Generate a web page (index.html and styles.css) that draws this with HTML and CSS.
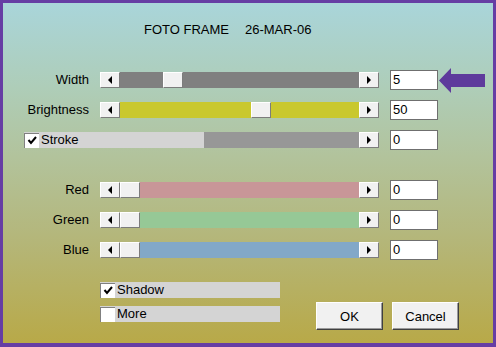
FILE: index.html
```html
<!DOCTYPE html>
<html>
<head>
<meta charset="utf-8">
<link rel="stylesheet" href="styles.css">
</head>
<body>
<div class="dialog">
  <div class="title"><span>FOTO FRAME</span><span>26-MAR-06</span></div>

  <div class="rows">
    <div class="row">
      <div class="label">Width</div>
      <div class="slider">
        <div class="sbtn"><span class="tri-left"></span></div>
        <div class="track gray"><div class="pad" style="width:43px"></div><div class="thumb"></div></div>
        <div class="sbtn"><span class="tri-right"></span></div>
      </div>
      <div class="value">5</div>
      <svg class="pointer" width="46" height="26" viewBox="0 0 46 26"><polygon points="0,12.5 12,0 12,6 46,6 46,19 12,19 12,25" fill="#5e3a9c"/></svg>
    </div>

    <div class="row">
      <div class="label">Brightness</div>
      <div class="slider">
        <div class="sbtn"><span class="tri-left"></span></div>
        <div class="track yellow"><div class="pad" style="width:131px"></div><div class="thumb"></div></div>
        <div class="sbtn"><span class="tri-right"></span></div>
      </div>
      <div class="value">50</div>
    </div>

    <div class="row">
      <div class="stroke-check">
        <span class="check"><svg width="13" height="13" viewBox="0 0 13 13"><polyline points="2.5,6 5,9 10,3" fill="none" stroke="#000" stroke-width="2"/></svg></span>
        <span class="opt-text">Stroke</span>
      </div>
      <div class="stroke-track"></div>
      <div class="sbtn gapped"><span class="tri-right"></span></div>
      <div class="value">0</div>
    </div>

    <div class="row spaced">
      <div class="label">Red</div>
      <div class="slider">
        <div class="sbtn"><span class="tri-left"></span></div>
        <div class="track red"><div class="thumb"></div></div>
        <div class="sbtn"><span class="tri-right"></span></div>
      </div>
      <div class="value">0</div>
    </div>

    <div class="row">
      <div class="label">Green</div>
      <div class="slider">
        <div class="sbtn"><span class="tri-left"></span></div>
        <div class="track green"><div class="thumb"></div></div>
        <div class="sbtn"><span class="tri-right"></span></div>
      </div>
      <div class="value">0</div>
    </div>

    <div class="row">
      <div class="label">Blue</div>
      <div class="slider">
        <div class="sbtn"><span class="tri-left"></span></div>
        <div class="track blue"><div class="thumb"></div></div>
        <div class="sbtn"><span class="tri-right"></span></div>
      </div>
      <div class="value">0</div>
    </div>
  </div>

  <div class="bottom">
    <div class="options">
      <div class="option">
        <span class="check"><svg width="13" height="13" viewBox="0 0 13 13"><polyline points="2.5,6 5,9 10,3" fill="none" stroke="#000" stroke-width="2"/></svg></span>
        <span class="opt-text">Shadow</span>
      </div>
      <div class="option">
        <span class="check"></span>
        <span class="opt-text">More</span>
      </div>
    </div>
    <div class="actions">
      <div class="button">OK</div>
      <div class="button">Cancel</div>
    </div>
  </div>
</div>
</body>
</html>
```

FILE: styles.css
```css
html, body {
  margin: 0;
  padding: 0;
}

body {
  font-family: "Liberation Sans", Arial, sans-serif;
  font-size: 13px;
  color: #000;
}

.dialog {
  width: 496px;
  height: 347px;
  box-sizing: border-box;
  border: 3px solid #663da4;
  border-bottom-width: 4px;
  overflow: hidden;
  background: linear-gradient(180deg, #a9d5da 0%, #aecdb8 25%, #b2c39c 45%, #b4b77c 68%, #b8a948 100%);
}

.title {
  display: flex;
  gap: 16px;
  margin-top: 19px;
  padding-left: 141px;
  height: 15px;
  line-height: 15px;
}

.rows {
  display: flex;
  flex-direction: column;
  gap: 10px;
  margin-top: 33px;
}

.row {
  display: flex;
  align-items: center;
  height: 20px;
}

.row.spaced {
  margin-top: 20px;
}

.label {
  width: 86px;
  margin-right: 11px;
  text-align: right;
  line-height: 20px;
}

.slider {
  display: flex;
  width: 279px;
  height: 16px;
  margin-right: 11px;
}

.sbtn, .thumb {
  width: 20px;
  height: 16px;
  box-sizing: border-box;
  background: #f1f1f1;
  border: 1px solid;
  border-color: #ffffff #7c7c7c #7c7c7c #ffffff;
  display: flex;
  align-items: center;
  justify-content: center;
  flex: none;
}

.sbtn.gapped {
  margin-right: 11px;
}

.tri-left {
  width: 0;
  height: 0;
  border-top: 4px solid transparent;
  border-bottom: 4px solid transparent;
  border-right: 4px solid #000;
}

.tri-right {
  width: 0;
  height: 0;
  border-top: 4px solid transparent;
  border-bottom: 4px solid transparent;
  border-left: 4px solid #000;
}

.track {
  flex: 1;
  display: flex;
  height: 16px;
}

.pad {
  flex: none;
}

.track.gray { background: #808080; }
.track.yellow { background: #c9c82e; }
.track.red { background: #c89698; }
.track.green { background: #96c896; }
.track.blue { background: #82a8c8; }

.value {
  width: 48px;
  height: 20px;
  box-sizing: border-box;
  border: 1px solid #6f6f6f;
  background: #fff;
  padding-left: 2px;
  line-height: 18px;
}

.pointer {
  display: block;
  margin-left: 1px;
  margin-top: 2px;
}

.stroke-check {
  display: flex;
  align-items: center;
  margin-left: 21px;
  width: 180px;
  height: 16px;
  background: #d4d4d4;
}

.stroke-track {
  width: 155px;
  height: 16px;
  background: #979797;
}

.check {
  width: 15px;
  height: 15px;
  box-sizing: border-box;
  background: #fff;
  border-top: 1px solid #808080;
  border-left: 1px solid #808080;
  display: flex;
  align-items: center;
  justify-content: center;
  flex: none;
}

.opt-text {
  margin-left: 2px;
  line-height: 16px;
}

.bottom {
  display: flex;
  margin-top: 22px;
  padding-left: 97px;
}

.options {
  display: flex;
  flex-direction: column;
  gap: 8px;
  width: 180px;
}

.option {
  display: flex;
  align-items: center;
  height: 16px;
  background: #d4d4d4;
}

.actions {
  display: flex;
  gap: 9px;
  margin-left: 36px;
  margin-top: 20px;
}

.button {
  width: 67px;
  height: 28px;
  box-sizing: border-box;
  background: #f1f1f1;
  border: 1px solid;
  border-color: #ffffff #404040 #404040 #ffffff;
  box-shadow: inset -1px -1px 0 #9a9a9a;
  display: flex;
  align-items: center;
  justify-content: center;
}
```
